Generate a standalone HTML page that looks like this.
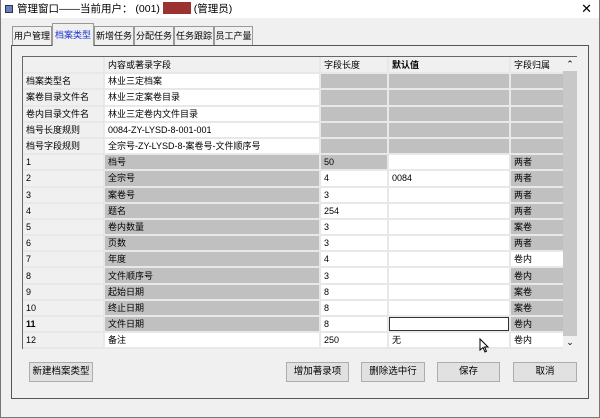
<!DOCTYPE html>
<html><head><meta charset="utf-8"><style>
*{box-sizing:border-box;margin:0;padding:0}
body{width:600px;height:418px;background:#f0f0f0;font-family:"Liberation Sans","Noto Sans CJK SC",sans-serif;font-size:10px;color:#000;position:relative;overflow:hidden;white-space:nowrap}
.title{position:absolute;left:0;top:0;width:600px;height:18px;background:#fff;font-size:10.5px;line-height:18px}
.win{position:absolute;left:0;top:0;width:600px;height:418px;border:1px solid #777;border-top:none}
.tab{position:absolute;top:26px;height:20px;border:1px solid #999;border-bottom:none;background:#f0f0f0;font-size:9px;line-height:18px;text-align:center;white-space:nowrap;overflow:hidden}
.page{position:absolute;left:11px;top:45px;width:578px;height:354px;border:1px solid #555;background:#f0f0f0}
.grid{position:absolute;left:22px;top:56px;width:555px;height:293px;border-left:1px solid #666;border-top:1px solid #666;background:#c0c0c0;overflow:hidden}
table{border-collapse:collapse;table-layout:fixed;position:absolute;left:0;top:0}
td{height:16.2px;border-right:2px solid #e8e8e8;border-bottom:2px solid #e8e8e8;padding:0 0 0 3px;font-size:9px;white-space:nowrap;overflow:hidden;line-height:14px}
td.h{background:#f0f0f0}
td.w{background:#fff}
td.g{background:#c0c0c0}
.sb{position:absolute;left:540px;top:0;width:14px;height:293px;background:#c8c8c8}
.btn{position:absolute;top:362px;height:20px;border:1px solid #adadad;background:#e1e1e1;font-size:9.5px;line-height:18px;text-align:center;white-space:nowrap}
</style></head><body>
<div class="title"><span style="position:absolute;left:5px;top:5px;width:8px;height:8px;background:#6a7ec0;border:1px solid #334"></span><span style="position:absolute;left:17px">管理窗口——当前用户： (001) <span style="display:inline-block;width:28px;height:12px;background:#9b3232;vertical-align:-2px"></span> (管理员)</span><span style="position:absolute;right:8px;font-size:13px">✕</span></div>
<div class="win"></div>
<div class="tab" style="left:12px;width:40px">用户管理</div>
<div class="tab" style="left:52px;width:42px;top:23px;height:23px;color:#1a35d0;background:#f0f0f0;z-index:2;line-height:22px">档案类型</div>
<div class="tab" style="left:94px;width:40px">新增任务</div>
<div class="tab" style="left:134px;width:40px">分配任务</div>
<div class="tab" style="left:174px;width:40px">任务跟踪</div>
<div class="tab" style="left:214px;width:39px">员工产量</div>
<div class="page"></div>
<div class="grid">
<table>
<colgroup><col style="width:81px"><col style="width:216px"><col style="width:68px"><col style="width:122px"><col style="width:54px"></colgroup>
<tr><td class="h"></td><td class="h">内容或著录字段</td><td class="h">字段长度</td><td class="h"><b>默认值</b></td><td class="h">字段归属</td></tr>
<tr><td class="h">档案类型名</td><td class="w">林业三定档案</td><td class="g"></td><td class="g"></td><td class="g"></td></tr>
<tr><td class="h">案卷目录文件名</td><td class="w">林业三定案卷目录</td><td class="g"></td><td class="g"></td><td class="g"></td></tr>
<tr><td class="h">卷内目录文件名</td><td class="w">林业三定卷内文件目录</td><td class="g"></td><td class="g"></td><td class="g"></td></tr>
<tr><td class="h">档号长度规则</td><td class="w">0084-ZY-LYSD-8-001-001</td><td class="g"></td><td class="g"></td><td class="g"></td></tr>
<tr><td class="h">档号字段规则</td><td class="w">全宗号-ZY-LYSD-8-案卷号-文件顺序号</td><td class="g"></td><td class="g"></td><td class="g"></td></tr>
<tr><td class="h">1</td><td class="g">档号</td><td class="g">50</td><td class="w"></td><td class="g">两者</td></tr>
<tr><td class="h">2</td><td class="g">全宗号</td><td class="w">4</td><td class="w">0084</td><td class="g">两者</td></tr>
<tr><td class="h">3</td><td class="g">案卷号</td><td class="w">3</td><td class="w"></td><td class="g">两者</td></tr>
<tr><td class="h">4</td><td class="g">题名</td><td class="w">254</td><td class="w"></td><td class="g">两者</td></tr>
<tr><td class="h">5</td><td class="g">卷内数量</td><td class="w">3</td><td class="w"></td><td class="g">案卷</td></tr>
<tr><td class="h">6</td><td class="g">页数</td><td class="w">3</td><td class="w"></td><td class="g">两者</td></tr>
<tr><td class="h">7</td><td class="g">年度</td><td class="w">4</td><td class="w"></td><td class="w">卷内</td></tr>
<tr><td class="h">8</td><td class="g">文件顺序号</td><td class="w">3</td><td class="w"></td><td class="g">卷内</td></tr>
<tr><td class="h">9</td><td class="g">起始日期</td><td class="w">8</td><td class="w"></td><td class="g">案卷</td></tr>
<tr><td class="h">10</td><td class="g">终止日期</td><td class="w">8</td><td class="w"></td><td class="g">案卷</td></tr>
<tr><td class="h"><b>11</b></td><td class="g">文件日期</td><td class="w">8</td><td class="w" style="outline:1px solid #333;outline-offset:-2px"></td><td class="g">卷内</td></tr>
<tr><td class="h">12</td><td class="w">备注</td><td class="w">250</td><td class="w">无</td><td class="w">卷内</td></tr>
</table>
<div class="sb"><div style="height:14px;background:#f0f0f0;font-size:9px;text-align:center;line-height:14px">⌃</div><div style="position:absolute;bottom:0;width:14px;height:14px;background:#f0f0f0;font-size:9px;text-align:center;line-height:12px">⌄</div></div>
</div>
<svg style="position:absolute;left:479px;top:338px" width="10" height="15" viewBox="0 0 10 15"><path d="M1 1 L1 12 L4 9.5 L6 14 L7.5 13.3 L5.5 9 L9 9 Z" fill="#fff" stroke="#000" stroke-width="1"/></svg>
<div class="btn" style="left:29px;width:64px">新建档案类型</div>
<div class="btn" style="left:286px;width:63px">增加著录项</div>
<div class="btn" style="left:361px;width:64px">删除选中行</div>
<div class="btn" style="left:437px;width:63px">保存</div>
<div class="btn" style="left:513px;width:64px">取消</div>
</body></html>
